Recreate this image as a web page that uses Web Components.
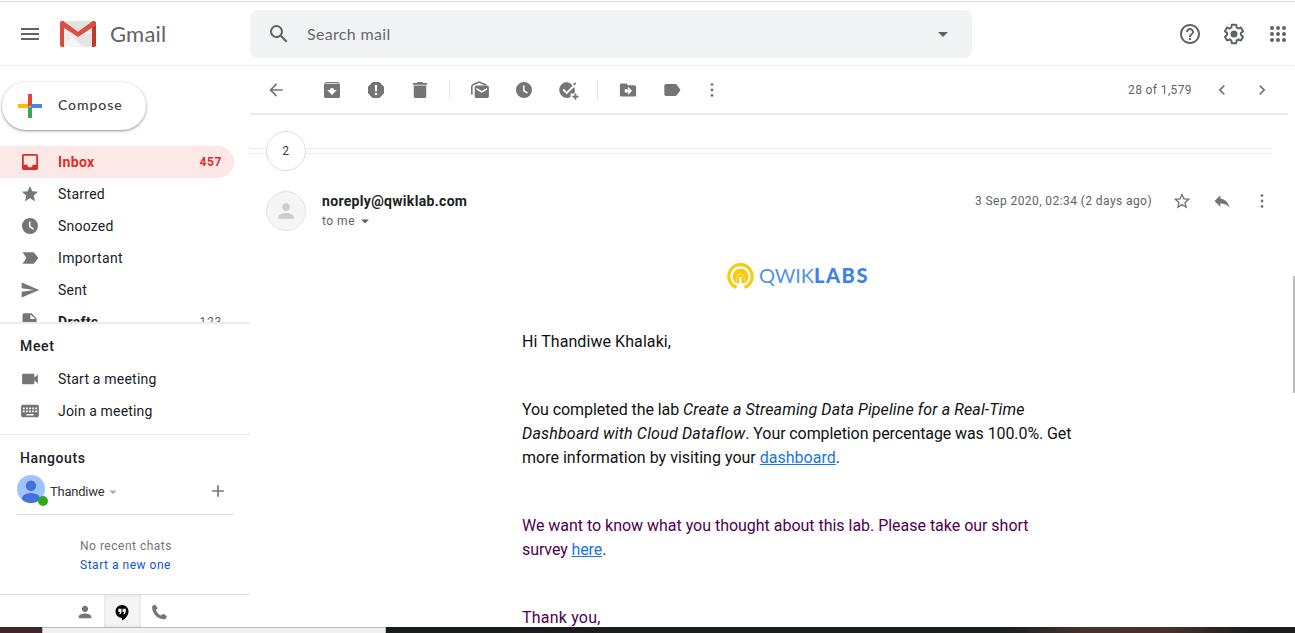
<!DOCTYPE html>
<html lang="en">
<head>
<meta charset="utf-8">
<title>Gmail</title>
<style>
html,body{margin:0;height:633px;overflow:hidden;background:#fff;font-family:Roboto,"Liberation Sans",sans-serif;color:#202124}
</style>
</head>
<body>
<mail-app></mail-app>
<script>
const ICONS = {
  menu:'<path d="M3 18h18v-2H3zm0-5h18v-2H3zm0-7v2h18V6z"/>',
  search:'<path d="M20.49 19l-5.73-5.73C15.53 12.2 16 10.91 16 9.5A6.5 6.5 0 1 0 9.5 16c1.41 0 2.7-.47 3.77-1.24L19 20.49 20.49 19zM5 9.5C5 7.01 7.01 5 9.5 5S14 7.01 14 9.5 11.99 14 9.5 14 5 11.99 5 9.5z"/>',
  drop:'<path d="M7 10l5 5 5-5z"/>',
  help:'<path d="M11 18h2v-2h-2v2zm1-16C6.48 2 2 6.48 2 12s4.48 10 10 10 10-4.48 10-10S17.52 2 12 2zm0 18c-4.41 0-8-3.59-8-8s3.59-8 8-8 8 3.59 8 8-3.59 8-8 8zm0-14c-2.21 0-4 1.79-4 4h2c0-1.1.9-2 2-2s2 .9 2 2c0 2-3 1.75-3 5h2c0-2.25 3-2.5 3-5 0-2.21-1.79-4-4-4z"/>',
  gear:'<path d="M13.85 22.25h-3.7c-.74 0-1.36-.54-1.45-1.27l-.27-1.89c-.27-.14-.53-.29-.79-.46l-1.8.72c-.7.26-1.47-.03-1.81-.65L2.2 15.53c-.35-.66-.2-1.44.36-1.88l1.53-1.19c-.01-.15-.02-.3-.02-.46 0-.15.01-.31.02-.46l-1.52-1.19c-.59-.45-.74-1.26-.37-1.88l1.85-3.19c.34-.62 1.11-.9 1.79-.63l1.81.73c.26-.17.52-.32.78-.46l.27-1.91c.09-.7.71-1.25 1.44-1.25h3.7c.74 0 1.36.54 1.45 1.27l.27 1.89c.27.14.53.29.79.46l1.8-.72c.71-.26 1.48.03 1.82.65l1.84 3.18c.36.66.2 1.44-.36 1.88l-1.52 1.19c.01.15.02.3.02.46s-.01.31-.02.46l1.52 1.19c.56.45.72 1.23.37 1.86l-1.86 3.22c-.34.62-1.11.9-1.8.63l-1.8-.72c-.26.17-.52.32-.78.46l-.27 1.91c-.1.68-.72 1.22-1.46 1.22zm-3.23-2h2.76l.37-2.55.53-.22c.44-.18.88-.44 1.34-.78l.45-.34 2.38.96 1.38-2.4-2.03-1.58.07-.56c.03-.26.06-.51.06-.78s-.03-.53-.06-.78l-.07-.56 2.03-1.58-1.39-2.4-2.39.96-.45-.35c-.42-.32-.87-.58-1.33-.77l-.52-.22-.37-2.55h-2.76l-.37 2.55-.53.21c-.44.19-.88.44-1.34.79l-.45.33-2.38-.95-1.39 2.39 2.03 1.58-.07.56a7 7 0 0 0-.06.79c0 .26.02.53.06.78l.07.56-2.03 1.58 1.38 2.4 2.39-.96.45.35c.43.33.86.58 1.33.77l.53.22.38 2.55z"/><circle cx="12" cy="12" r="3.5"/>',
  apps:'<g>'+[6,12,18].map(y=>[6,12,18].map(x=>`<circle cx="${x}" cy="${y}" r="2"/>`).join('')).join('')+'</g>',
  back:'<path d="M20 11H7.83l5.59-5.59L12 4l-8 8 8 8 1.41-1.41L7.83 13H20v-2z"/>',
  archive:'<path d="M20.54 5.23l-1.39-1.68C18.88 3.21 18.47 3 18 3H6c-.47 0-.88.21-1.16.55L3.46 5.23C3.17 5.57 3 6.02 3 6.5V19c0 1.1.9 2 2 2h14c1.1 0 2-.9 2-2V6.5c0-.48-.17-.93-.46-1.27zM12 17.5L6.5 12H10v-2h4v2h3.5L12 17.5zM5.12 5l.81-1h12l.94 1H5.12z"/>',
  spam:'<path d="M15.73 3H8.27L3 8.27v7.46L8.27 21h7.46L21 15.73V8.27L15.73 3zM12 18a1.45 1.45 0 1 1 0-2.9 1.45 1.45 0 0 1 0 2.9zm1.2-4.6h-2.4V6.5h2.4z"/>',
  trash:'<path d="M5 19c0 1.1.9 2 2 2h10c1.1 0 2-.9 2-2V7H5v12zM20 4h-4.5l-1-1h-5l-1 1H4v2h16V4z"/>',
  unread:'<path d="M20 7H8c-1.1 0-2 .9-2 2v10c0 1.1.9 2 2 2h12c1.1 0 2-.9 2-2V9c0-1.100-.9-2-2-2zm0 4.600l-6 3.600-6-3.600V9.500l6 3.600 6-3.600z"/><path d="M2.800 17V7.800c0-.8.4-1.200 1.200-1.600L11 3l8 3.300" fill="none" stroke="currentColor" stroke-width="1.800"/>',
  clock:'<path fill-rule="evenodd" d="M12 3a9 9 0 1 0 0 18 9 9 0 0 0 0-18zm-1.200 4h1.800v5l3.900 2.800-1 1.500-4.700-3.300z"/>',
  task:'<path d="M11 3a9 9 0 1 0 4 17v-4h4.300A9 9 0 0 0 19 8.500l-8.500 8.400-4.700-4.700 1.500-1.500 3.200 3.200 6.800-6.900A9 9 0 0 0 11 3z"/><path d="M18.500 6.200l2.300-2.300M20.500 16v7M17 19.500h7" fill="none" stroke="currentColor" stroke-width="2"/>',
  move:'<path d="M20 6h-8l-2-2H4c-1.100 0-2 .9-2 2v12c0 1.100.9 2 2 2h16c1.100 0 2-.9 2-2V8c0-1.100-.9-2-2-2zm-8 12v-3H8v-4h4V8l5 5-5 5z"/>',
  label:'<path d="M17.630 5.840C17.270 5.330 16.670 5 16 5L5 5.010C3.900 5.010 3 5.900 3 7v10c0 1.100.9 1.990 2 1.990L16 19c.67 0 1.270-.33 1.630-.84L22 12l-4.370-6.160z"/>',
  more:'<circle cx="12" cy="5.500" r="1.700"/><circle cx="12" cy="12" r="1.700"/><circle cx="12" cy="18.500" r="1.700"/>',
  left:'<path d="M15.410 7.410L14 6l-6 6 6 6 1.410-1.410L10.830 12z"/>',
  right:'<path d="M10 6L8.590 7.410 13.170 12l-4.580 4.590L10 18l6-6z"/>',
  inbox:'<path d="M19 3H5c-1.100 0-2 .9-2 2v14c0 1.100.9 2 2 2h14c1.100 0 2-.9 2-2V5c0-1.100-.9-2-2-2zm0 12h-4c0 1.660-1.350 3-3 3s-3-1.340-3-3H5V5h14v10z"/>',
  star:'<path d="M12 17.270L18.180 21l-1.640-7.030L22 9.240l-7.190-.61L12 2 9.190 8.630 2 9.240l5.460 4.730L5.820 21z"/>',
  starline:'<path d="M22 9.240l-7.190-.62L12 2 9.190 8.630 2 9.240l5.460 4.730L5.820 21 12 17.270 18.180 21l-1.630-7.030L22 9.240zM12 15.400l-3.760 2.270 1-4.280-3.320-2.880 4.380-.38L12 6.100l1.710 4.040 4.380.38-3.320 2.880 1 4.280L12 15.400z"/>',
  important:'<path d="M3 5h12.500c.7 0 1.200.3 1.600.8L22 12l-4.900 6.200c-.4.5-.9.8-1.600.8H3l4.800-7z"/>',
  sent:'<path d="M2 21l21-9L2 3v7l15 2-15 2z"/>',
  draft:'<path d="M5 1.500c-1.100 0-2 .9-2 2v17c0 1.100.9 2 2 2h13c1.100 0 2-.9 2-2V8l-6-6.500H5zm7.500 7V3L18.500 8.500z"/>',
  video:'<path d="M17 10.500V7c0-.55-.45-1-1-1H4c-.55 0-1 .45-1 1v10c0 .55.450 1 1 1h12c.550 0 1-.45 1-1v-3.500l4 4v-11z"/>',
  keyboard:'<path fill-rule="evenodd" d="M4 5h16c1.100 0 2 .9 2 2v10c0 1.100-.9 2-2 2H4c-1.100 0-2-.9-2-2V7c0-1.100.9-2 2-2zm0 3v2h2V8zm3.500 0v2h2V8zM11 8v2h2V8zm3.500 0v2h2V8zM18 8v2h2V8zM4 11.500v2h2v-2zm3.500 0v2h2v-2zm3.500 0v2h2v-2zm3.500 0v2h2v-2zm3.500 0v2h2v-2zM8 15.500v1.700h8v-1.700z"/>',
  person:'<path d="M12 12c2.210 0 4-1.790 4-4s-1.790-4-4-4-4 1.790-4 4 1.790 4 4 4zm0 2c-2.670 0-8 1.340-8 4v2h16v-2c0-2.660-5.330-4-8-4z"/>',
  quote:'<path fill-rule="evenodd" d="M12 2a9.200 9.200 0 0 0 0 18.400V24c4.500-2.500 9.200-7.200 9.200-12.800A9.200 9.200 0 0 0 12 2zM6.800 7.500h4.500v4.800L9.700 15H7.900l1.300-3H6.800zm6 0h4.500v4.800L15.700 15h-1.800l1.300-3h-2.400z"/>',
  phone:'<path d="M7 2.500L3.400 4.300C2.200 13 10.500 21.800 20 21.200l2-3.700-4.700-3.200-2.800 2.200c-2.900-1.400-5.200-4-6.300-6.800l2-2.600z"/>',
  reply:'<path d="M10 9V5l-7 7 7 7v-4.100c5 0 8.500 1.600 11 5.100-1-5-4-10-11-11z"/>',
  plus:'<path d="M19 13h-6v6h-2v-6H5v-2h6V5h2v6h6z"/>'
};

const define = (name, template, setup) => customElements.define(name, class extends HTMLElement {
  constructor(){
    super();
    this.attachShadow({mode:'open'});
  }
  connectedCallback(){
    this.shadowRoot.innerHTML = typeof template === 'function' ? template(this) : template;
    if(setup) setup(this);
  }
});

/* Glyph centred in a cell; the viewBox is widened or narrowed so that 24 units span "size" pixels. */
define('mail-icon', el => {
  const cell = +(el.getAttribute('cell') || 20);
  const side = 24 * cell / (el.getAttribute('size') || 20);
  return `<style>
:host{display:block;flex:none;width:${cell}px;height:${cell}px}
svg{display:block;fill:currentColor;overflow:visible}</style>
<svg width="${cell}" height="${cell}" viewBox="${12-side/2} ${12-side/2} ${side} ${side}">${ICONS[el.getAttribute('name')]}</svg>`;
});

/* One line of text tracked to fill a given measure. */
define('fit-text', '<style>:host{display:inline-block;white-space:pre;flex:none}</style><slot></slot>', el => {
  const goal = parseFloat(el.getAttribute('measure'));
  const count = el.textContent.length;
  const natural = el.getBoundingClientRect().width;
  el.style.letterSpacing = ((goal - natural) / count).toFixed(4) + 'px';
});

define('gmail-logo', `<style>:host{display:flex;flex:none;margin-top:1px}svg{display:block}</style>
<svg width="36" height="26" viewBox="0 0 36 26">
<path fill="#ededed" d="M2 0h32v26H2z"/><path fill="#e2e2e2" d="M4 0h28L18 11z"/><path fill="#f6f6f6" d="M14 14L4 26h22z"/>
<path fill="#e0e0e0" d="M18 15l-5 2 10 9h9V12z" opacity=".6"/>
<path fill="#d54b3d" d="M0 2.500C0 .5 2 0 4 0v26H2c-1.300 0-2-.7-2-2z"/><path fill="#c0392b" d="M36 2.500C36 .5 34 0 32 0v26h2c1.300 0 2-.7 2-2z"/>
<path fill="#dc4e41" d="M0 2.500C0 .8 1 0 2.300 0 3.300 0 3.700.2 4.300.7L18 10.800 31.700.7c.6-.5 1-.7 2-.7C35 0 36 .8 36 2.500c0 1-.4 1.800-1.300 2.400L18 16 1.300 4.900C.4 4.300 0 3.500 0 2.500z"/></svg>`);

define('top-bar', `<style>
:host{display:flex;box-sizing:border-box;height:66px;flex:none;align-items:center;padding:2px 5px 0 18px;border-bottom:1px solid #ebebeb;background:linear-gradient(#fff 1px,#d9dbdb 1px 2px,#fff 2px);color:#5f6368}
gmail-logo{margin-left:18px}
.name{font:22px/28px Lato,sans-serif;margin-left:14px;width:140px;color:#5f6368}
.search{display:flex;align-items:center;box-sizing:border-box;width:722px;height:48px;border-radius:8px;background:#f1f3f4;padding:0 17px;margin-top:1px}
.search span{flex:1;font:16px/24px Lato,sans-serif;color:#65696d;padding-left:16px}
.tools{display:flex;gap:20px;margin-left:206px}
</style>
<mail-icon name="menu" cell="24" size="24"></mail-icon><gmail-logo></gmail-logo>
<div class="name"><fit-text measure="56.500">Gmail</fit-text></div>
<div class="search"><mail-icon name="search" cell="24" size="24"></mail-icon><span><fit-text measure="83.500">Search mail</fit-text></span><mail-icon name="drop" cell="24" size="24"></mail-icon></div>
<div class="tools"><mail-icon name="help" cell="24" size="24"></mail-icon><mail-icon name="gear" cell="24" size="24"></mail-icon><mail-icon name="apps" cell="24" size="24"></mail-icon></div>`);

define('compose-button', `<style>
:host{display:flex;align-items:center;box-sizing:border-box;width:144px;height:48px;flex:none;border-radius:24px;background:#fff;box-shadow:0 1px 2px rgba(60,64,67,.38),0 1px 3px 1px rgba(60,64,67,.16);padding-left:16px;color:#3c4043}
svg{flex:none;display:block;margin-right:16px}
fit-text{font:500 14px/20px Lato,sans-serif;margin-top:-2px}
</style><svg width="24" height="24" viewBox="0 0 24 24"><path fill="#ea4335" d="M10 0h4v12h-4z"/><path fill="#fbbc04" d="M0 10h10v4H0z"/><path fill="#34a853" d="M10 14v10h4V12z"/><path fill="#4285f4" d="M12 14h12v-4H14z"/><path fill="#ea4335" d="M10 14l4-4h-4z"/></svg><fit-text measure="64.500">Compose</fit-text>`);

define('nav-row', el => `<style>
:host{display:flex;box-sizing:border-box;width:234px;height:32px;flex:none;align-items:center;padding:0 12px 0 20px;border-radius:0 16px 16px 0;color:#202124;font-size:14px;line-height:20px}
mail-icon{color:#757575;margin-right:18px}
.count{margin-left:auto;font-size:12px;color:#5f6368}
:host([active]){background:#fce8e6;color:#d93025;font-weight:700}
:host([active]) mail-icon,:host([active]) .count{color:#d93025}
:host([strong]){font-weight:700}:host([strong]) .count{font-weight:400}
</style><mail-icon name="${el.getAttribute('icon')}" size="${el.getAttribute('size')||21.33}"></mail-icon><fit-text measure="${el.getAttribute('measure')}">${el.getAttribute('label')}</fit-text>${el.hasAttribute('count')?`<fit-text class="count" measure="22.500">${el.getAttribute('count')}</fit-text>`:''}`);

define('chat-tabs', `<style>
:host{display:flex;height:33px;flex:none;box-sizing:border-box;border-top:1px solid #dedede;padding-left:67px;color:#757575}
div{width:37px;display:flex;align-items:center;justify-content:center;padding-top:1px;padding-right:1px;box-sizing:border-box}
.on{background:#f5f5f5;color:#000;box-shadow:inset 0 0 4px #ddd}
</style><div><mail-icon name="person" size="19"></mail-icon></div><div class="on"><mail-icon name="quote" size="17"></mail-icon></div><div><mail-icon name="phone" size="19"></mail-icon></div>`);

define('side-panel', `<style>
:host{display:flex;flex-direction:column;width:250px;height:561px;flex:none}
compose-button{margin:16px 0 16px 2px}
nav{height:176px;overflow:hidden;display:flex;flex-direction:column;flex:none}
section{box-sizing:border-box;flex:none}
.meet{height:113px;border-top:2px solid #ebebeb;border-bottom:1px solid #ebebeb;padding-top:12px}
.title{font:500 14px/20px Roboto,sans-serif;padding-left:20px}
.title+nav-row{margin-top:7px}
.hang{height:159px;padding-top:13px}
.user{display:flex;align-items:center;box-sizing:border-box;width:217px;height:47px;margin:0 0 0 17px;border-bottom:1px solid #dedede;font-size:13px;color:#333;padding-top:1px}
.avatar{position:relative;width:28px;height:28px;margin-right:5px;margin-top:-6px}
.avatar i{position:absolute;left:21px;top:21px;width:10px;height:10px;border-radius:50%;background:#34a81a}
.user .arrow{color:#aaa;margin-left:-2px}.user .plus{margin-left:auto;margin-right:6px;margin-top:-1px;color:#777}
.empty{padding:22px 0 0 80px;font-size:12px;line-height:19px;color:#757575;display:flex;flex-direction:column;align-items:flex-start}
.empty .link{color:#15c}
</style>
<compose-button></compose-button>
<nav><nav-row active icon="inbox" label="Inbox" measure="36.500" count="457"></nav-row>
<nav-row icon="star" size="19.500" label="Starred" measure="47"></nav-row>
<nav-row icon="clock" label="Snoozed" measure="55.500"></nav-row>
<nav-row icon="important" size="20" label="Important" measure="65"></nav-row>
<nav-row icon="sent" size="20" label="Sent" measure="29"></nav-row>
<nav-row strong icon="draft" size="20" label="Drafts" measure="40.500" count="123"></nav-row></nav>
<section class="meet"><div class="title"><fit-text measure="34.500">Meet</fit-text></div>
<nav-row icon="video" size="21" label="Start a meeting" measure="98.500"></nav-row>
<nav-row icon="keyboard" label="Join a meeting" measure="94.500"></nav-row></section>
<section class="hang"><div class="title"><fit-text measure="65.500">Hangouts</fit-text></div>
<div class="user"><div class="avatar"><svg width="28" height="28" viewBox="0 0 28 28"><defs><clipPath id="round"><circle cx="14" cy="14" r="14"/></clipPath></defs><g clip-path="url(#round)"><path fill="#a0c3ff" d="M0 0h28v28H0z"/><circle cx="14" cy="10.800" r="5.200" fill="#4273db"/><ellipse cx="14" cy="23.500" rx="9" ry="5.500" fill="#4273db"/></g></svg><i></i></div><fit-text measure="54.500">Thandiwe</fit-text><mail-icon class="arrow" name="drop" size="17"></mail-icon><mail-icon class="plus" name="plus" size="20"></mail-icon></div>
<div class="empty"><fit-text measure="92">No recent chats</fit-text><fit-text class="link" measure="91">Start a new one</fit-text></div></section>
<chat-tabs></chat-tabs>`);

define('mail-toolbar', `<style>
:host{display:flex;align-items:center;box-sizing:border-box;width:1038px;height:48px;flex:none;border-bottom:1px solid #e8e8e8;box-shadow:0 1px 1px #eee;padding:1px 16px 0 16px;color:#757575;gap:24px}
hr{width:1px;height:20px;margin:0 -4px 0 -5px;border:0;background:#e6e6e6}
.back{margin-right:12px}
.page{margin-left:auto;font-size:12px;color:#5f6368;margin-right:-4px}
.right{margin-left:-4px}.last{margin-left:-4px}
</style>
<mail-icon class="back" name="back" size="20"></mail-icon><mail-icon name="archive" size="21.330"></mail-icon><mail-icon name="spam" size="21.330"></mail-icon><mail-icon name="trash" size="21.330"></mail-icon>
<hr><mail-icon name="unread" size="21.330"></mail-icon><mail-icon name="clock" size="21.330"></mail-icon><mail-icon name="task" size="21"></mail-icon>
<hr><mail-icon name="move" size="19.500"></mail-icon><mail-icon name="label" size="20.500"></mail-icon><mail-icon class="last" name="more" size="20"></mail-icon>
<fit-text class="page" measure="64">28 of 1,579</fit-text><mail-icon name="left" size="20"></mail-icon><mail-icon class="right" name="right" size="20"></mail-icon>`);

define('thread-fold', `<style>
:host{display:flex;width:1022px;height:40px;align-items:center;flex:none;font-size:12px;color:#3c4043;margin-top:17px}
.line{height:4px;border:solid #ebebeb;border-width:1px 0;width:16px}
.line:last-child{flex:1}
b{box-sizing:border-box;width:40px;height:40px;border:1px solid #dadce0;border-radius:50%;display:flex;align-items:center;justify-content:center;font-weight:400;padding-right:1px}
</style><div class="line"></div><b>2</b><div class="line"></div>`);

define('message-head', `<style>
:host{display:flex;width:1022px;height:40px;margin-top:20px;box-sizing:border-box;padding-left:16px;flex:none;color:#757575}
.avatar{box-sizing:border-box;width:40px;height:40px;border-radius:50%;border:1px solid #e4e4e4;background:#f5f5f5;color:#ccc;display:flex;align-items:center;justify-content:center;margin-right:16px}
.who{display:flex;flex-direction:column;align-items:flex-start}
.from{font-weight:700;font-size:14px;line-height:20px;color:#202124}
.to{display:flex;align-items:center;font-size:12px;line-height:20px;color:#5f6368}
.meta{display:flex;height:20px;align-items:center;margin-left:auto;gap:20px;font-size:12px;color:#5f6368}
.meta mail-icon{color:#757575}
</style><div class="avatar"><mail-icon name="person" size="23"></mail-icon></div>
<div class="who"><fit-text class="from" measure="145.300">noreply@qwiklab.com</fit-text><div class="to"><fit-text measure="33">to me</fit-text><mail-icon name="drop" size="19"></mail-icon></div></div>
<div class="meta"><fit-text measure="177">3 Sep 2020, 02:34 (2 days ago)</fit-text><mail-icon name="starline" size="20"></mail-icon><mail-icon name="reply" size="20"></mail-icon><mail-icon name="more" size="20"></mail-icon></div>`);

define('qwiklabs-logo', `<style>
:host{display:flex;align-items:center;height:28px;flex:none;font:20px/28px Lato,sans-serif}
svg{display:block;margin-right:5px}
fit-text{color:#5592e6;margin-top:-2px}.labs{font-weight:900;color:#3c83e6}
</style><svg width="27" height="27" viewBox="0 0 27 27"><path d="M9.500 24.400A11.700 11.700 0 1 1 17.500 24.400" fill="none" stroke="#f5ca14" stroke-width="3.200"/><path fill="#f5ca14" d="M9 20.200a8 8 0 1 1 9 0z"/><path d="M9.800 20.500v-6a3.700 3.700 0 0 1 7.400 0v6" fill="none" stroke="#fae68a" stroke-width=".8"/><path fill="#fff" d="M12.500 14h2v7h-2z"/></svg><fit-text measure="55">QWIK</fit-text><fit-text class="labs" measure="55">LABS</fit-text>`);

define('message-body', `<style>
:host{display:flex;flex-direction:column;width:552px;margin:31px 0 0 272px;font-size:16px;line-height:24px;color:#111;overflow:hidden;height:365px;flex:none}
qwiklabs-logo{margin-left:205px}
p{margin:0 0 44px;display:flex;flex-direction:column;align-items:flex-start}
.row{display:flex}i{font-style:italic}
.hi{margin-top:40px}.purple{color:#500050}a{color:#1a73e8;text-decoration:underline}
</style><qwiklabs-logo></qwiklabs-logo>
<p class="hi"><fit-text measure="149">Hi Thandiwe Khalaki,</fit-text></p>
<p><span class="row"><fit-text measure="161">You completed the lab </fit-text><i><fit-text measure="341.500">Create a Streaming Data Pipeline for a Real-Time</fit-text></i></span>
<span class="row"><i><fit-text measure="223">Dashboard with Cloud Dataflow</fit-text></i><fit-text measure="326">. Your completion percentage was 100.0%. Get</fit-text></span>
<fit-text measure="318">more information by visiting your <a>dashboard</a>.</fit-text></p>
<p class="purple"><fit-text measure="506.500">We want to know what you thought about this lab. Please take our short</fit-text>
<fit-text measure="84.300">survey <a>here</a>.</fit-text></p>
<p class="purple"><fit-text measure="78.500">Thank you,</fit-text></p>`);

define('mail-view', `<style>
:host{display:flex;flex-direction:column;flex:1;height:561px;overflow:hidden}
</style><mail-toolbar></mail-toolbar><thread-fold></thread-fold><message-head></message-head><message-body></message-body>`);

define('desk-strip', `<style>
:host{display:flex;height:6px;flex:none}
.a{width:42px;background:#41262a}.b{box-sizing:border-box;width:344px;background:#f1f1f1;border:solid #b8b8b8;border-width:1px 1px 0}
.c{flex:1;background:linear-gradient(90deg,#1b1c1e 0,#1d1e20 68%,#45312b 76%,#483129 86%,#1d1d1f 95%)}
</style><div class="a"></div><div class="b"></div><div class="c"></div>`);

define('mail-app', `<style>
:host{display:flex;flex-direction:column;position:relative;width:1295px;height:633px;overflow:hidden;background:#fff}
main{display:flex;height:561px;flex:none}
.thumb{position:absolute;right:0;top:276px;width:2px;height:117px;background:#bdbdbd}
</style><top-bar></top-bar><main><side-panel></side-panel><mail-view></mail-view></main><desk-strip></desk-strip><div class="thumb"></div>`);
</script>
</body>
</html>
